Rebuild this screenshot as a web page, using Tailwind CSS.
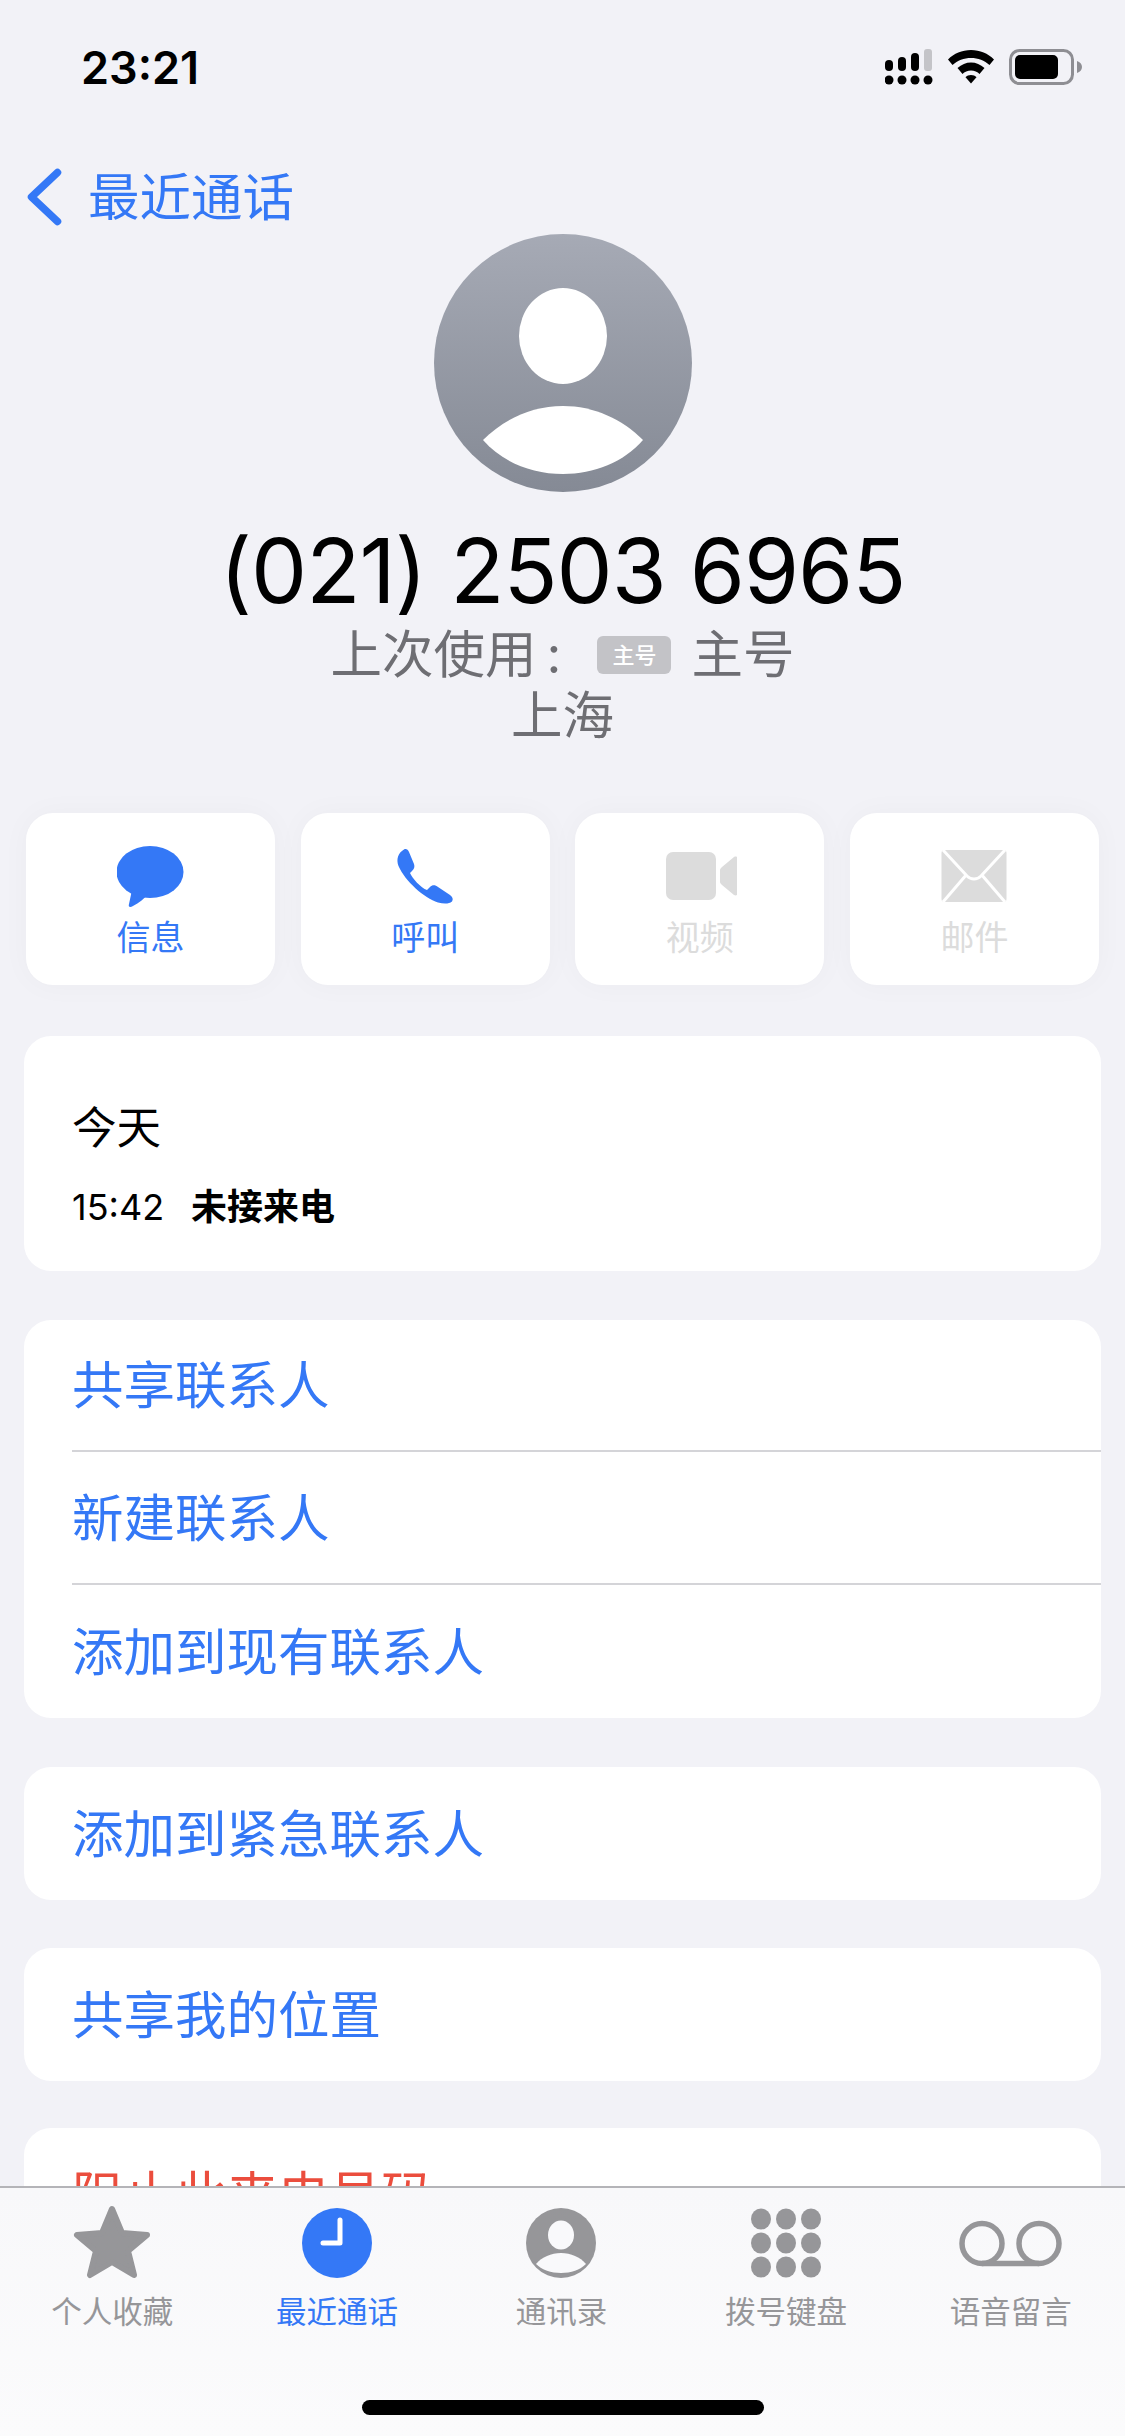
<!DOCTYPE html>
<html lang="zh-CN">
<head>
    <meta charset="UTF-8">
    <meta name="viewport" content="width=device-width, initial-scale=1.0">
    <title>最近通话</title>
    <script src="https://cdn.jsdelivr.net/npm/@tailwindcss/browser@4"></script>
</head>
<body class="font-['Inter','Noto_Sans_CJK_SC',sans-serif] bg-[#f2f2f7]">
<div class="w-[1125px] h-[2436px] flex flex-col overflow-hidden">
    <main class="h-[2186px] overflow-hidden flex flex-col shrink-0">
        <!-- status bar -->
        <div class="h-[134px] shrink-0 flex items-center justify-between pl-[81px] pr-[42px]">
            <span class="text-[45px] leading-none font-semibold text-black">23:21</span>
            <div class="flex items-center gap-[15px]">
                <svg width="48" height="36" viewBox="0 0 48 36">
                    <rect x="0" y="11" width="8" height="11" rx="4" fill="#000"/>
                    <rect x="13" y="8" width="8" height="14" rx="4" fill="#000"/>
                    <rect x="26" y="4" width="8" height="18" rx="4" fill="#000"/>
                    <rect x="39" y="0" width="8" height="22" rx="3" fill="#c4c4c8"/>
                    <circle cx="4" cy="31" r="4.500" fill="#000"/>
                    <circle cx="17" cy="31" r="4.500" fill="#000"/>
                    <circle cx="30" cy="31" r="4.500" fill="#000"/>
                    <circle cx="43" cy="31" r="4.500" fill="#000"/>
                </svg>
                <svg width="46" height="34" viewBox="0 0 46 34">
                    <path d="M23 0C14 0 6 3.500 0 9.500L4.500 15C9.500 10.500 16 8 23 8C30 8 36.500 10.500 41.500 15L46 9.500C40 3.500 32 0 23 0Z" fill="#000"/>
                    <path d="M23 12.500C18 12.500 13.500 14.500 9.500 18L14.500 24C16.500 22 19.700 20.500 23 20.500C26.300 20.500 29.500 22 31.500 24L36.500 18C32.500 14.500 28 12.500 23 12.500Z" fill="#000"/>
                    <path d="M23 25C20.800 25 18.800 25.800 17.500 27.200L23 33.500L28.500 27.200C27.200 25.800 25.200 25 23 25Z" fill="#000"/>
                </svg>
                <svg width="74" height="36" viewBox="0 0 74 36">
                    <rect x="1.500" y="1.500" width="62" height="33" rx="9" fill="none" stroke="#8e8e93" stroke-width="3"/>
                    <rect x="6" y="6" width="43" height="24" rx="5" fill="#000"/>
                    <path d="M68 12C71 13 73 15 73 18C73 21 71 23 68 24Z" fill="#8e8e93"/>
                </svg>
            </div>
        </div>

        <!-- back -->
        <div class="h-[100px] shrink-0 pt-[26px]">
            <div class="h-[74px] flex items-center pl-[27px] gap-[26px] text-[#3478f6]">
                <svg width="35" height="58" viewBox="0 0 35 58">
                    <path d="M30.500 4.500L4.500 29L30.500 53.500" fill="none" stroke="#3478f6" stroke-width="7.500" stroke-linecap="round" stroke-linejoin="round"/>
                </svg>
                <span class="text-[51.500px] leading-none pt-[2px]">最近通话</span>
            </div>
        </div>

        <!-- avatar and number -->
        <div class="flex flex-col items-center shrink-0">
            <div class="w-[258px] h-[258px] rounded-full bg-linear-to-b from-[#a6aab5] to-[#858a95]">
                <svg width="258" height="258" viewBox="0 0 258 258">
                    <ellipse cx="129" cy="102" rx="44" ry="48" fill="#fff"/>
                    <path d="M49 206C70 185 98 172 129 172C160 172 188 185 209 206C190 228 160 240 129 240C98 240 68 228 49 206Z" fill="#fff"/>
                </svg>
            </div>
            <div class="mt-[29px] h-[100px] leading-[100px] text-[89px] tracking-[-1px] text-black">(021) 2503 6965</div>
            <div class="mt-[4px] h-[60px] flex items-center text-[51.500px] leading-none text-[#6e6e73]">
                <span>上次使用<span class="ml-[10px] mr-[36px]">:</span></span>
                <span class="w-[74px] h-[38px] rounded-[6px] bg-[#c3c3c7] text-white text-[22px] font-medium flex items-center justify-center">主号</span>
                <span class="ml-[20px]">主号</span>
            </div>
            <div class="mt-[1px] h-[60px] flex items-center text-[51.500px] leading-none text-[#6e6e73]">上海</div>
        </div>

        <!-- actions -->
        <div class="mt-[67px] grid grid-cols-4 gap-[25.670px] px-[26px] shrink-0">
            <div class="h-[172px] bg-white rounded-[27px] shadow-[0_0_30px_rgba(0,0,0,0.03)] flex flex-col items-center pt-[33px]">
                <svg width="68" height="62" viewBox="1 0 68 62">
                    <ellipse cx="34" cy="26" rx="33.500" ry="26" fill="#3478f6"/>
                    <path d="M16 44L13 58C12 61 14 62 17 60C23 57 28 53 32 48Z" fill="#3478f6"/>
                </svg>
                <span class="mt-[13px] text-[34px] leading-none text-[#3478f6]">信息</span>
            </div>
            <div class="h-[172px] bg-white rounded-[27px] shadow-[0_0_30px_rgba(0,0,0,0.03)] flex flex-col items-center pt-[33px]">
                <svg width="66" height="62" viewBox="-5 -3 66 62">
                    <path d="M7 0.500C9 -0.500 11 0.500 12 3L17 15C18 18 17 20 15 22L13 24C15 29 24 39 30 41L33 38C35 36 38 35.500 41 38L53 46C55.500 48 56.500 50 55 52.500C52 55 47 55 41 53.500C27 49 8 32 1.500 17C-1 10 1 4 7 0.500Z" fill="#3478f6"/>
                </svg>
                <span class="mt-[13px] text-[34px] leading-none text-[#3478f6]">呼叫</span>
            </div>
            <div class="h-[172px] bg-white rounded-[27px] shadow-[0_0_30px_rgba(0,0,0,0.03)] flex flex-col items-center pt-[33px]">
                <svg width="74" height="62" viewBox="-3 0 74 62">
                    <rect x="0" y="6" width="50" height="48" rx="7" fill="#dcdcdc"/>
                    <path d="M54 24C54 23 55 22 56 21L68 11C70 10 72 11 72 13V47C72 49 70 50 68 49L56 39C55 38 54 37 54 36Z" fill="#dcdcdc"/>
                </svg>
                <span class="mt-[13px] text-[34px] leading-none text-[#dcdcdc]">视频</span>
            </div>
            <div class="h-[172px] bg-white rounded-[27px] shadow-[0_0_30px_rgba(0,0,0,0.03)] flex flex-col items-center pt-[33px]">
                <svg width="66" height="62" viewBox="0 0 66 62">
                    <rect x="0.500" y="4" width="65" height="52" rx="3" fill="#dcdcdc"/>
                    <path d="M2 4L26 30C30 34 36 34 40 30L64 4M2 56L26 28M64 56L40 28" fill="none" stroke="#fff" stroke-width="3"/>
                </svg>
                <span class="mt-[13px] text-[34px] leading-none text-[#dcdcdc]">邮件</span>
            </div>
        </div>

        <!-- call history -->
        <section class="mt-[51px] mx-[24px] h-[235px] bg-white rounded-[27px] shrink-0 px-[48px] pt-[64px]">
            <div class="h-[56px] flex items-center text-[44.500px] leading-none text-black">今天</div>
            <div class="mt-[33px] flex items-center text-[36px] leading-none text-black">
                <span>15:42</span>
                <span class="ml-[27px] font-semibold">未接来电</span>
            </div>
        </section>

        <!-- contact actions -->
        <section class="mt-[49px] mx-[24px] bg-white rounded-[27px] shrink-0 text-[51.500px] text-[#3478f6] pl-[48px]">
            <div class="h-[132px] pt-[2px] flex items-center border-b-[2px] border-[#d4d4d8] leading-none">共享联系人</div>
            <div class="h-[133px] pt-[2px] flex items-center border-b-[2px] border-[#d4d4d8] leading-none">新建联系人</div>
            <div class="h-[133px] pt-[2px] flex items-center leading-none">添加到现有联系人</div>
        </section>
        <section class="mt-[49px] mx-[24px] h-[133px] pt-[2px] bg-white rounded-[27px] shrink-0 flex items-center pl-[48px] text-[51.500px] leading-none text-[#3478f6]">添加到紧急联系人</section>
        <section class="mt-[48px] mx-[24px] h-[133px] pt-[2px] bg-white rounded-[27px] shrink-0 flex items-center pl-[48px] text-[51.500px] leading-none text-[#3478f6]">共享我的位置</section>
        <section class="mt-[47px] mx-[24px] h-[133px] pt-[2px] bg-white rounded-[27px] shrink-0 flex items-center pl-[48px] text-[51.500px] leading-none text-[#eb4d3d]">阻止此来电号码</section>
    </main>

    <!-- tab bar -->
    <nav class="h-[250px] shrink-0 border-t-[2px] border-[#b4b4b8] bg-linear-to-b from-[#f8f8fa] to-[#fbfbfc] flex flex-col">
        <div class="grid grid-cols-5 pr-[2px] pt-[16px] text-[30.500px] leading-none text-[#969699]">
            <div class="flex flex-col items-center">
                <svg width="78" height="76" viewBox="0 0 78 76">
                    <path d="M39 5L49 29L74 31L55 47L61 71L39 58L17 71L23 47L4 31L29 29Z" fill="#969699" stroke="#969699" stroke-width="6" stroke-linejoin="round"/>
                </svg>
                <span class="mt-[17px]">个人收藏</span>
            </div>
            <div class="flex flex-col items-center text-[#3478f6]">
                <svg width="78" height="76" viewBox="0 0 78 76">
                    <circle cx="39" cy="39" r="35" fill="#3478f6"/>
                    <path d="M42 16V39H25" fill="none" stroke="#fff" stroke-width="5" stroke-linecap="round" stroke-linejoin="round"/>
                </svg>
                <span class="mt-[17px]">最近通话</span>
            </div>
            <div class="flex flex-col items-center">
                <svg width="78" height="76" viewBox="0 0 78 76">
                    <circle cx="39" cy="39" r="35" fill="#969699"/>
                    <ellipse cx="39" cy="31" rx="13" ry="14.500" fill="#f9f9fb"/>
                    <path d="M14 60C20 53 29 49 39 49C49 49 58 53 64 60C58 66 49 69 39 69C29 69 20 66 14 60Z" fill="#f9f9fb"/>
                </svg>
                <span class="mt-[17px]">通讯录</span>
            </div>
            <div class="flex flex-col items-center">
                <svg width="78" height="76" viewBox="0 0 78 76" fill="#969699">
                    <ellipse cx="14" cy="15" rx="10" ry="10.500"/>
                    <ellipse cx="39" cy="15" rx="10" ry="10.500"/>
                    <ellipse cx="64" cy="15" rx="10" ry="10.500"/>
                    <ellipse cx="14" cy="39" rx="10" ry="10.500"/>
                    <ellipse cx="39" cy="39" rx="10" ry="10.500"/>
                    <ellipse cx="64" cy="39" rx="10" ry="10.500"/>
                    <ellipse cx="14" cy="63" rx="10" ry="10.500"/>
                    <ellipse cx="39" cy="63" rx="10" ry="10.500"/>
                    <ellipse cx="64" cy="63" rx="10" ry="10.500"/>
                </svg>
                <span class="mt-[17px]">拨号键盘</span>
            </div>
            <div class="flex flex-col items-center">
                <svg width="103" height="76" viewBox="0 0 103 76">
                    <circle cx="23" cy="39.500" r="20" fill="none" stroke="#969699" stroke-width="5.500"/>
                    <circle cx="80" cy="39.500" r="20" fill="none" stroke="#969699" stroke-width="5.500"/>
                    <path d="M23 59.500H80" fill="none" stroke="#969699" stroke-width="5.500"/>
                </svg>
                <span class="mt-[17px]">语音留言</span>
            </div>
        </div>
        <div class="mt-[72px] mx-auto w-[402px] h-[15px] rounded-full bg-black"></div>
    </nav>
</div>
</body>
</html>
